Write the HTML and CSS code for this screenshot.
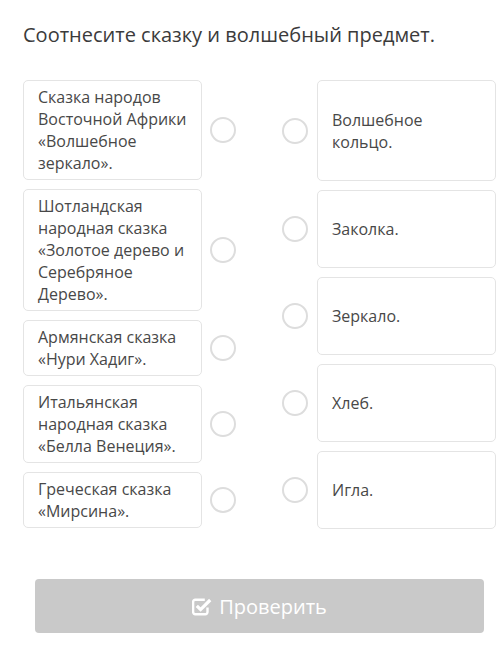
FILE: index.html
```html
<!DOCTYPE html>
<html lang="ru">
<head>
    <meta charset="UTF-8">
    <meta name="viewport" content="width=device-width, initial-scale=1.0">
    <title>Соотнесите сказку и волшебный предмет</title>
    <link rel="stylesheet" href="styles.css">
</head>
<body>
    <div class="quiz">
        <h1 class="question">Соотнесите сказку и волшебный предмет.</h1>

        <div class="match">
            <div class="column">
                <div class="item">
                    <div class="card">Сказка народов Восточной Африки «Волшебное зеркало».</div>
                    <span class="dot"></span>
                </div>
                <div class="item">
                    <div class="card">Шотландская народная сказка «Золотое дерево и Серебряное Дерево».</div>
                    <span class="dot"></span>
                </div>
                <div class="item">
                    <div class="card">Армянская сказка «Нури Хадиг».</div>
                    <span class="dot"></span>
                </div>
                <div class="item">
                    <div class="card">Итальянская народная сказка «Белла Венеция».</div>
                    <span class="dot"></span>
                </div>
                <div class="item">
                    <div class="card">Греческая сказка «Мирсина».</div>
                    <span class="dot"></span>
                </div>
            </div>

            <div class="column right">
                <div class="item">
                    <span class="dot"></span>
                    <div class="card answer tall">Волшебное кольцо.</div>
                </div>
                <div class="item">
                    <span class="dot"></span>
                    <div class="card answer">Заколка.</div>
                </div>
                <div class="item">
                    <span class="dot"></span>
                    <div class="card answer">Зеркало.</div>
                </div>
                <div class="item">
                    <span class="dot"></span>
                    <div class="card answer">Хлеб.</div>
                </div>
                <div class="item">
                    <span class="dot"></span>
                    <div class="card answer">Игла.</div>
                </div>
            </div>
        </div>

        <button class="check" type="button">
            <svg class="check-icon" width="20" height="19" viewBox="0 0 20 19">
                <path d="M15.5 10.5v4.5a2.2 2.2 0 0 1-2.2 2.2h-10a2.2 2.2 0 0 1-2.2-2.2v-10a2.2 2.2 0 0 1 2.2-2.2h9.5" fill="none" stroke="#fff" stroke-width="2.4"/>
                <path d="M4.8 8.8l3.8 3.8 9.6-9.6" fill="none" stroke="#fff" stroke-width="3.2"/>
            </svg>
            Проверить
        </button>
    </div>
</body>
</html>
```

FILE: styles.css
```css
* {
    box-sizing: border-box;
    margin: 0;
    padding: 0;
}

body {
    font-family: "Open Sans", "Noto Sans", sans-serif;
    background-color: #fff;
    color: #484848;
}

.quiz {
    padding: 21px 4px 0 23px;
}

.question {
    font-size: 20px;
    font-weight: 400;
    line-height: 28px;
    color: #3b3b3b;
}

.match {
    display: flex;
    justify-content: space-between;
    margin-top: 31px;
}

.column {
    display: flex;
    flex-direction: column;
    gap: 9px;
}

.item {
    display: flex;
    align-items: center;
}

.card {
    width: 179px;
    padding: 5px 10px 5px 14px;
    font-size: 16px;
    line-height: 22px;
    background-color: #fff;
    border: 1px solid #e4e4e4;
    border-radius: 5px;
}

.answer {
    display: flex;
    align-items: center;
    min-height: 78px;
}

.tall {
    min-height: 101px;
}

.dot {
    width: 26px;
    height: 26px;
    border: 2px solid #ddd;
    border-radius: 50%;
    margin-left: 8px;
}

.right .dot {
    margin-left: 0;
    margin-right: 9px;
}

.check {
    display: flex;
    align-items: center;
    justify-content: center;
    gap: 7px;
    width: calc(100% - 24px);
    height: 54px;
    margin: 50px 12px 0;
    border: none;
    border-radius: 4px;
    background-color: #c9c9c9;
    color: #fff;
    font-family: "Open Sans", "Noto Sans", sans-serif;
    font-size: 20px;
}
```
